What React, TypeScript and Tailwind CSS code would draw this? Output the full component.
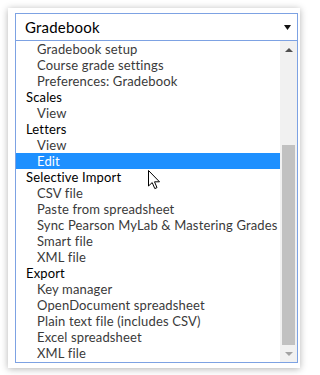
import React from "react";

type Row = { label: string; group?: boolean; selected?: boolean };

const rows: Row[] = [
  { label: "Gradebook setup" },
  { label: "Course grade settings" },
  { label: "Preferences: Gradebook" },
  { label: "Scales", group: true },
  { label: "View" },
  { label: "Letters", group: true },
  { label: "View" },
  { label: "Edit", selected: true },
  { label: "Selective Import", group: true },
  { label: "CSV file" },
  { label: "Paste from spreadsheet" },
  { label: "Sync Pearson MyLab & Mastering Grades" },
  { label: "Smart file" },
  { label: "XML file" },
  { label: "Export", group: true },
  { label: "Key manager" },
  { label: "OpenDocument spreadsheet" },
  { label: "Plain text file (includes CSV)" },
  { label: "Excel spreadsheet" },
  { label: "XML file" },
];

function Cursor() {
  return (
    <svg
      className="absolute left-[140px] top-[162px]"
      width="13"
      height="20"
      viewBox="0 0 13 20"
    >
      <path
        d="M0.5 0.5 L0.5 16 L4.2 12.6 L6.8 18.6 L9 17.6 L6.5 11.8 L11.5 11.8 Z"
        fill="#fff"
        stroke="#000"
        strokeWidth="1"
        strokeLinejoin="round"
      />
    </svg>
  );
}

export default function App() {
  return (
    <div className="w-[306px] h-[375px] bg-white pt-[8px] pl-[8px]" style={{ fontFamily: "Lato, 'Open Sans', sans-serif" }}>
      <div className="relative w-[292px] h-[360px] bg-white pt-[5px] pl-[7px] shadow-[0_1px_7px_rgba(0,0,0,0.3)]">
        {/* select box */}
        <div className="flex items-center justify-between w-[283px] h-[28px] border border-[#7da2e3] pl-[9px] pr-[6px] text-[15px] text-black">
          <span className="tracking-[0.2px]">Gradebook</span>
          <svg width="7" height="5" viewBox="0 0 7 5">
            <path d="M0 0 H7 L3.5 5 Z" fill="#111" />
          </svg>
        </div>
        {/* dropdown list */}
        <div className="flex w-[283px] h-[323px] -mt-px border border-[#7da2e3]">
          <div className="flex flex-col flex-1">
            {rows.map((r, i) => (
              <div
                key={i}
                className={
                  "h-[16px] leading-[16px] text-[13px] tracking-[0.15px] whitespace-nowrap " +
                  (r.group ? "pl-[10px] text-black" : "pl-[21px] text-[#3a3a3a]") +
                  (r.selected ? " bg-[#1e90ff] text-white" : "")
                }
              >
                {r.label}
              </div>
            ))}
          </div>
          <div className="flex flex-col w-[17px] bg-[#f1f1f1]">
            <div className="flex items-center justify-center h-[17px]">
              <svg width="8" height="4" viewBox="0 0 8 4">
                <path d="M0 4 H8 L4 0 Z" fill="#505050" />
              </svg>
            </div>
            <div className="h-[87px]" />
            <div className="mx-[2px] h-[200px] bg-[#c1c1c1]" />
            <div className="flex items-center justify-center flex-1">
              <svg width="8" height="4" viewBox="0 0 8 4">
                <path d="M0 0 H8 L4 4 Z" fill="#a3a3a3" />
              </svg>
            </div>
          </div>
        </div>
        <Cursor />
      </div>
    </div>
  );
}
